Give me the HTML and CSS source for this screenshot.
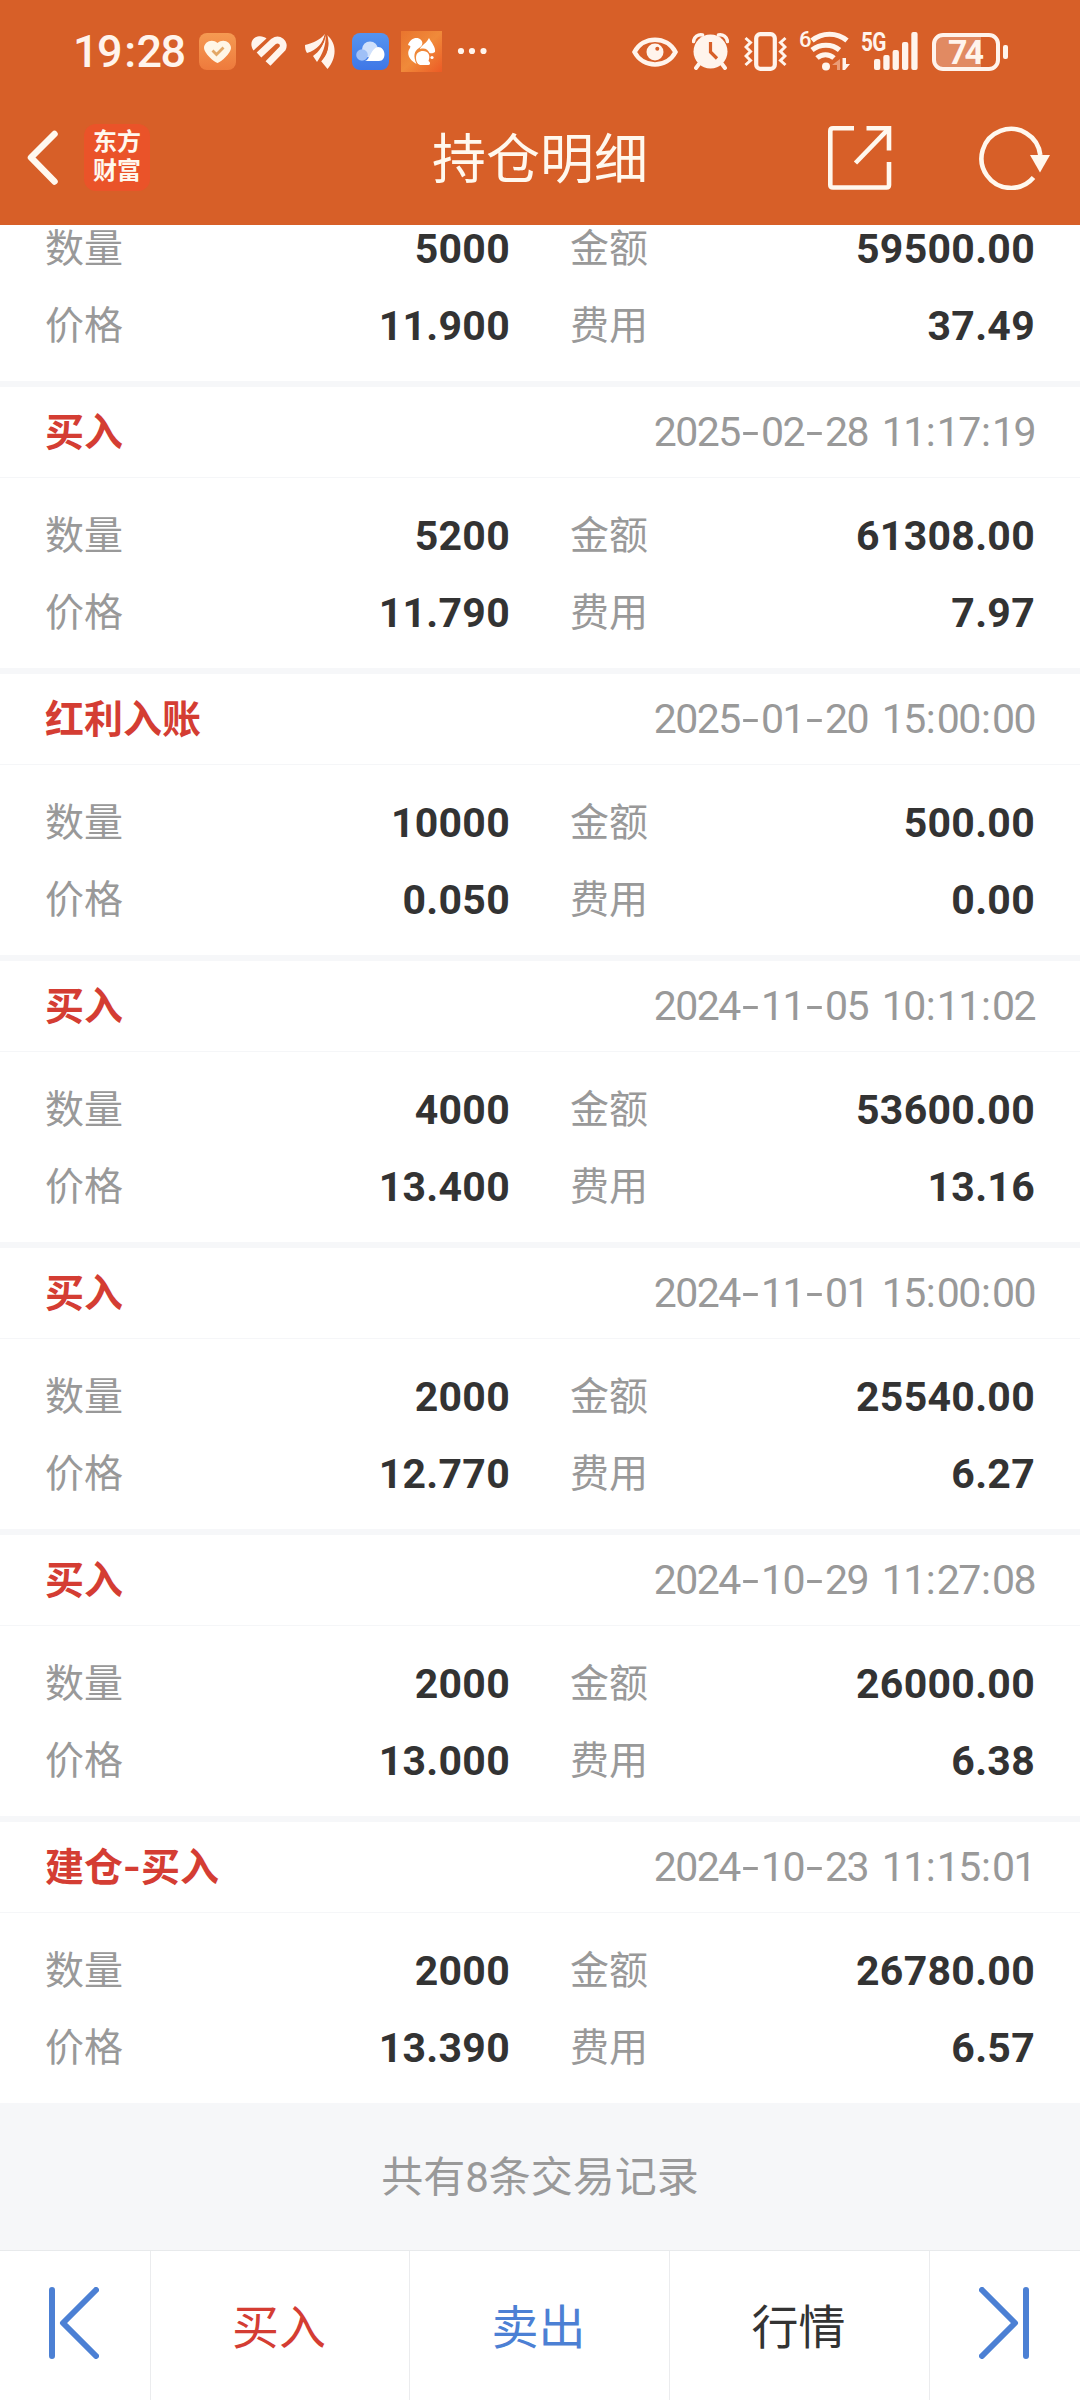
FILE: index.html
```html
<!DOCTYPE html>
<html lang="zh-CN">
<head>
    <meta charset="UTF-8">
    <meta name="viewport" content="width=device-width, initial-scale=1.0">
    <title>持仓明细</title>
    <link rel="stylesheet" href="styles.css">
</head>
<body>
    <header class="header">
        <div class="status-bar">
            <div class="status-left">
                <span class="clock">19<span class="clock-colon">:</span>28</span>
                <svg class="icon-health" width="37" height="37" viewBox="0 0 37 37">
                    <defs>
                        <linearGradient id="healthBg" x1="0" y1="0" x2="0" y2="1">
                            <stop offset="0" stop-color="#f59a52"/>
                            <stop offset="1" stop-color="#ee7a3c"/>
                        </linearGradient>
                    </defs>
                    <rect width="37" height="37" rx="8" fill="url(#healthBg)"/>
                    <path d="M18.500 30C15 29 5 20 5 15C5 9 13 5 18.500 10C24 5 32 9 32 15C32 20 22 29 18.500 30Z" fill="#fff6e6"/>
                    <path d="M13.500 17.500L17.500 21.500L24.500 14.500" fill="none" stroke="#e3a866" stroke-width="2.800"/>
                </svg>
                <svg class="icon-hearts" width="36" height="32" viewBox="0 0 36 32">
                    <path d="M2.500 14.500C-2 8 1 1 8 0.300C11 0 13.500 1 15.500 2.500Z" fill="#fff4ec"/>
                    <path d="M8 19L22.500 5.500C28 1.500 34.500 7 31.500 12.500L17 27.500" fill="none" stroke="#fff4ec" stroke-width="6.800"/>
                </svg>
                <svg class="icon-wing" width="30" height="35" viewBox="0 0 30 35" fill="#fff4ec">
                    <path d="M0 11C8 9 15 6 20 0C18 9 12 16 2 19C0.500 17 0 14 0 11Z"/>
                    <path d="M20.500 1C21.500 11 17 21 12 28L8 22C14 18 19 11 20.500 1Z"/>
                    <path d="M22 1C33 10 31 25 22.500 35L16 27C23 20 24.500 11 22 1Z"/>
                    <path d="M21.500 1C25 13 21 22 14 28.500" fill="none" stroke="#d75f28" stroke-width="1.400"/>
                    <path d="M20 1.500C19 10 14 17 5 21.500" fill="none" stroke="#d75f28" stroke-width="1.200"/>
                </svg>
                <svg class="icon-cloud" width="37" height="37" viewBox="0 0 37 37">
                    <defs>
                        <linearGradient id="cloudBg" x1="0" y1="0" x2="0" y2="1">
                            <stop offset="0" stop-color="#5594f0"/>
                            <stop offset="1" stop-color="#3f77e6"/>
                        </linearGradient>
                    </defs>
                    <rect width="37" height="37" rx="8" fill="url(#cloudBg)"/>
                    <circle cx="18" cy="16.500" r="8" fill="#cfe0fb"/>
                    <circle cx="10" cy="22" r="5.800" fill="#9fc0f7"/>
                    <path d="M13 28C18 27 19 15 26 14C34 14 35 28 27 28Z" fill="#fff"/>
                </svg>
                <svg class="icon-squirrel" width="41" height="41" viewBox="0 0 41 41">
                    <defs>
                        <linearGradient id="ucBg" x1="0" y1="0" x2="1" y2="1">
                            <stop offset="0" stop-color="#e9742e"/>
                            <stop offset="0.500" stop-color="#f08a3a"/>
                            <stop offset="1" stop-color="#ec5a25"/>
                        </linearGradient>
                    </defs>
                    <rect width="41" height="41" fill="url(#ucBg)"/>
                    <path d="M7 14C9 8 14 6 18 7.500C23 10 22 15 18 17C13 20 12 25 15.500 33C8 29 5 22 9 17C10 15 9 14.500 7 14Z" fill="#fff"/>
                    <path d="M21 15C24 12 26 11 28 7C30 11 35 16 34 21C32 22.500 30 22.500 28.500 22C27 18.500 24 16.500 19 18C19 17 20 16 21 15Z" fill="#fff"/>
                    <path d="M15 27C15 22 18 20 22 20C27 20 30 24 27.500 30C29.500 31 29.500 34 27.500 34H19C16 33 15 30 15 27Z" fill="#fff"/>
                    <circle cx="31" cy="26.500" r="1.600" fill="#fff"/>
                </svg>
                <svg class="icon-more" width="30" height="8" viewBox="0 0 30 8" fill="#fff4ec">
                    <circle cx="4" cy="4" r="3.100"/>
                    <circle cx="15" cy="4" r="3.100"/>
                    <circle cx="26.500" cy="4" r="3.100"/>
                </svg>
            </div>
            <div class="status-right">
                <svg class="icon-eye" width="46" height="30" viewBox="0 0 46 30">
                    <path d="M2.500 15C11 -1.500 35 -1.500 43.500 15C35 31.500 11 31.500 2.500 15Z" fill="none" stroke="#fff4ec" stroke-width="4.500"/>
                    <circle cx="23" cy="15" r="8.500" fill="#fff4ec"/>
                    <circle cx="25.300" cy="11.800" r="2" fill="#d75f28"/>
                </svg>
                <svg class="icon-alarm" width="37" height="37" viewBox="0 0 37 37">
                    <path d="M1.500 8.500C2 4 6 1 10.500 2M26.500 2C31 1 35 4 35.500 8.500" fill="none" stroke="#fff4ec" stroke-width="3.500" stroke-linecap="round"/>
                    <circle cx="18.500" cy="18.500" r="17" fill="#fff4ec"/>
                    <path d="M7 31L4 35M30 31L33 35" stroke="#fff4ec" stroke-width="4" stroke-linecap="round"/>
                    <path d="M18.500 9V19L25 25.500" fill="none" stroke="#d75f28" stroke-width="3.200"/>
                </svg>
                <svg class="icon-vibrate" width="43" height="39" viewBox="0 0 43 39" fill="none" stroke="#fff4ec">
                    <rect x="12.200" y="2.200" width="18.600" height="34.600" rx="4" stroke-width="4.200"/>
                    <path d="M1.500 6L6.500 10.500L2 15L6.500 19.500L2 24L6.500 28.500L1.500 33" stroke-width="3"/>
                    <path d="M41.500 6L36.500 10.500L41 15L36.500 19.500L41 24L36.500 28.500L41.500 33" stroke-width="3"/>
                </svg>
                <div class="wifi">
                    <span class="wifi-gen">6</span>
                    <svg width="40" height="40" viewBox="0 0 40 40" fill="none" stroke="#fff4ec" stroke-width="5">
                        <path d="M2 9.500C12 1 27 1 37 9.500"/>
                        <path d="M2 19C10 12.500 22 12.500 29.500 19"/>
                        <path d="M7 27C12 22.500 19 22.500 24 27"/>
                        <circle cx="16" cy="35.500" r="4" fill="#fff4ec" stroke="none"/>
                        <path d="M30 28V39H27V34H22Z" fill="#eb9d77" stroke="none"/>
                        <path d="M32.500 27V39H35L40 33H36V27Z" fill="#fff4ec" stroke="none"/>
                    </svg>
                </div>
                <div class="signal">
                    <span class="signal-gen">5G</span>
                    <svg width="44" height="38" viewBox="0 0 44 38" fill="#fff4ec">
                        <rect x="0" y="27" width="6.300" height="11" rx="2"/>
                        <rect x="9.300" y="23" width="6.300" height="15" rx="2"/>
                        <rect x="18.600" y="18" width="6.300" height="20" rx="2"/>
                        <rect x="28" y="10" width="6.300" height="28" rx="2"/>
                        <rect x="37.300" y="0" width="6.300" height="38" rx="2"/>
                    </svg>
                </div>
                <div class="battery"><span class="battery-level">74</span></div>
                <div class="battery-tip"></div>
            </div>
        </div>
        <div class="nav-bar">
            <div class="nav-left">
                <svg width="34" height="56" viewBox="0 0 34 56" fill="none" stroke="#fff8ee" stroke-width="6.500" stroke-linecap="round" stroke-linejoin="round">
                    <path d="M30.500 4L7 27.500L30.500 51.500"/>
                </svg>
                <div class="logo"><span>东方</span><span>财富</span></div>
            </div>
            <h1 class="title">持仓明细</h1>
            <div class="nav-right">
                <svg width="64" height="64" viewBox="0 0 64 64" fill="none" stroke="#fff8ee" stroke-width="4.600">
                    <path d="M26 2.300H5Q2.300 2.300 2.300 5V59Q2.300 61.500 5 61.500H58.500Q61 61.500 61 59V36"/>
                    <path d="M38.500 2.300H61V24.500"/>
                    <path d="M60.500 2.800L27.500 37"/>
                </svg>
                <svg width="72" height="64" viewBox="0 0 72 64">
                    <path d="M54.500 51.500A29.500 29.500 0 1 1 61.300 29" fill="none" stroke="#fff8ee" stroke-width="4.600"/>
                    <path d="M51 29H71L61 46.500Z" fill="#fff8ee"/>
                </svg>
            </div>
        </div>
    </header>

    <main class="records">
        <section class="record">
            <div class="record-body">
                <div class="field"><span>数量</span><b>5000</b></div>
                <div class="field"><span>金额</span><b>59500.00</b></div>
                <div class="field"><span>价格</span><b>11.900</b></div>
                <div class="field"><span>费用</span><b>37.49</b></div>
            </div>
        </section>
        <section class="record">
            <div class="record-head">
                <h2>买入</h2>
                <time>2025<i>-</i>02<i>-</i>28 11<i class="colon">:</i>17<i class="colon">:</i>19</time>
            </div>
            <div class="record-body">
                <div class="field"><span>数量</span><b>5200</b></div>
                <div class="field"><span>金额</span><b>61308.00</b></div>
                <div class="field"><span>价格</span><b>11.790</b></div>
                <div class="field"><span>费用</span><b>7.97</b></div>
            </div>
        </section>
        <section class="record">
            <div class="record-head">
                <h2>红利入账</h2>
                <time>2025<i>-</i>01<i>-</i>20 15<i class="colon">:</i>00<i class="colon">:</i>00</time>
            </div>
            <div class="record-body">
                <div class="field"><span>数量</span><b>10000</b></div>
                <div class="field"><span>金额</span><b>500.00</b></div>
                <div class="field"><span>价格</span><b>0.050</b></div>
                <div class="field"><span>费用</span><b>0.00</b></div>
            </div>
        </section>
        <section class="record">
            <div class="record-head">
                <h2>买入</h2>
                <time>2024<i>-</i>11<i>-</i>05 10<i class="colon">:</i>11<i class="colon">:</i>02</time>
            </div>
            <div class="record-body">
                <div class="field"><span>数量</span><b>4000</b></div>
                <div class="field"><span>金额</span><b>53600.00</b></div>
                <div class="field"><span>价格</span><b>13.400</b></div>
                <div class="field"><span>费用</span><b>13.16</b></div>
            </div>
        </section>
        <section class="record">
            <div class="record-head">
                <h2>买入</h2>
                <time>2024<i>-</i>11<i>-</i>01 15<i class="colon">:</i>00<i class="colon">:</i>00</time>
            </div>
            <div class="record-body">
                <div class="field"><span>数量</span><b>2000</b></div>
                <div class="field"><span>金额</span><b>25540.00</b></div>
                <div class="field"><span>价格</span><b>12.770</b></div>
                <div class="field"><span>费用</span><b>6.27</b></div>
            </div>
        </section>
        <section class="record">
            <div class="record-head">
                <h2>买入</h2>
                <time>2024<i>-</i>10<i>-</i>29 11<i class="colon">:</i>27<i class="colon">:</i>08</time>
            </div>
            <div class="record-body">
                <div class="field"><span>数量</span><b>2000</b></div>
                <div class="field"><span>金额</span><b>26000.00</b></div>
                <div class="field"><span>价格</span><b>13.000</b></div>
                <div class="field"><span>费用</span><b>6.38</b></div>
            </div>
        </section>
        <section class="record">
            <div class="record-head">
                <h2>建仓<i>-</i>买入</h2>
                <time>2024<i>-</i>10<i>-</i>23 11<i class="colon">:</i>15<i class="colon">:</i>01</time>
            </div>
            <div class="record-body">
                <div class="field"><span>数量</span><b>2000</b></div>
                <div class="field"><span>金额</span><b>26780.00</b></div>
                <div class="field"><span>价格</span><b>13.390</b></div>
                <div class="field"><span>费用</span><b>6.57</b></div>
            </div>
        </section>
    </main>

    <p class="summary">共有8条交易记录</p>

    <footer class="toolbar">
        <button class="tool">
            <svg width="50" height="72" viewBox="0 0 50 72" fill="none" stroke="#4c80d4" stroke-width="6" stroke-linecap="round" stroke-linejoin="round">
                <path d="M3 3V69M47 3L14 36L47 69"/>
            </svg>
        </button>
        <button class="tool buy">买入</button>
        <button class="tool sell">卖出</button>
        <button class="tool">行情</button>
        <button class="tool">
            <svg width="50" height="72" viewBox="0 0 50 72" fill="none" stroke="#4c80d4" stroke-width="6" stroke-linecap="round" stroke-linejoin="round">
                <path d="M47 3V69M3 3L36 36L3 69"/>
            </svg>
        </button>
    </footer>
</body>
</html>
```

FILE: styles.css
```css
* {
    box-sizing: border-box;
}

body {
    margin: 0;
    width: 1080px;
    height: 2400px;
    display: flex;
    flex-direction: column;
    overflow: hidden;
    background: #fff;
    color: #333;
    font-family: Roboto, "Noto Sans CJK SC", sans-serif;
}

svg {
    display: block;
    flex: none;
}

i {
    font-style: normal;
}

/* header */
.header {
    flex: none;
    height: 225px;
    background: #d75f28;
    color: #fff8ee;
}

.status-bar {
    display: flex;
    justify-content: space-between;
    height: 103px;
    padding: 0 72px 0 73px;
}

.status-left,
.status-right {
    display: flex;
    align-items: center;
    color: #fff4ec;
}

.clock {
    width: 126px;
    font-size: 45px;
    font-weight: 500;
    letter-spacing: -1.5px;
    line-height: 52px;
}

.clock-colon {
    padding: 0 2px 0 3px;
}

.icon-hearts {
    margin-left: 15px;
}

.icon-wing {
    margin-left: 18px;
}

.icon-cloud {
    margin-left: 17px;
}

.icon-squirrel {
    margin-left: 12px;
}

.icon-more {
    margin: 0 0 2px 15px;
}

.icon-alarm {
    margin-left: 14px;
}

.icon-vibrate {
    margin-left: 15px;
}

.wifi {
    position: relative;
    margin: 0 0 2px 23px;
}

.wifi-gen {
    position: absolute;
    left: -11px;
    top: -2px;
    font-size: 22px;
    font-weight: 500;
    line-height: 22px;
}

.signal {
    position: relative;
    margin: 0 0 2px 24px;
}

.signal-gen {
    position: absolute;
    left: -13px;
    top: -3px;
    font-size: 26px;
    font-weight: 700;
    line-height: 26px;
    letter-spacing: -1px;
    transform: scaleX(0.8);
    transform-origin: 0 0;
}

.battery {
    width: 68px;
    height: 38px;
    margin-left: 14px;
    padding-right: 3px;
    border: 4px solid #fff4ec;
    border-radius: 11px;
    background: linear-gradient(to right, #e18a62 45px, transparent 45px);
    text-align: center;
}

.battery-level {
    font-size: 34px;
    font-weight: 700;
    line-height: 31px;
    letter-spacing: -3px;
}

.battery-tip {
    width: 5px;
    height: 14px;
    margin-left: 3px;
    border-radius: 2px;
    background: #fff4ec;
}

.nav-bar {
    display: grid;
    grid-template-columns: 1fr auto 1fr;
    align-items: center;
    height: 109px;
    padding: 0 29px 0 24px;
}

.nav-left,
.nav-right {
    display: flex;
    align-items: center;
}

.nav-left {
    gap: 26px;
}

.nav-right {
    justify-content: flex-end;
    gap: 87px;
}

.logo {
    display: flex;
    flex-direction: column;
    align-items: center;
    justify-content: center;
    width: 66px;
    height: 67px;
    padding-bottom: 1px;
    border-radius: 12px;
    background: #ea5329;
    font-size: 24px;
    font-weight: 700;
    line-height: 29px;
}

.title {
    margin: 0;
    padding: 6px 0 0 5px;
    font-size: 54px;
    font-weight: 400;
    line-height: 60px;
}

/* records */
.records {
    flex: none;
    height: 1878px;
    display: flex;
    flex-direction: column;
    justify-content: flex-end;
    gap: 6px;
    overflow: hidden;
    background: #f6f7f9;
}

.record {
    background: #fff;
}

.record-head {
    display: flex;
    align-items: center;
    justify-content: space-between;
    height: 91px;
    padding: 0 45px;
    border-bottom: 1px solid #f5f6f8;
}

.record-head h2 {
    margin: 0;
    padding-top: 2px;
    color: #d43d33;
    font-size: 39px;
    font-weight: 700;
    line-height: 60px;
}

.record-head time {
    color: #999;
    font-size: 41px;
    line-height: 60px;
    letter-spacing: -1.5px;
    word-spacing: 5px;
}

.record-head i {
    display: inline-block;
    width: 21px;
    letter-spacing: 0;
    text-align: center;
    transform: scaleX(1.5);
}

.record-head .colon {
    width: 12px;
    transform: none;
}

.record-head h2 i {
    width: 18px;
    transform: scaleX(1.2);
}

.record-body {
    display: grid;
    grid-template-columns: 1fr 1fr;
    grid-auto-rows: 77px;
    column-gap: 60px;
    height: 190px;
    padding: 19px 45px 0;
}

.field {
    display: flex;
    align-items: center;
    justify-content: space-between;
    line-height: 60px;
}

.field span {
    padding-top: 1px;
    color: #999;
    font-size: 39px;
}

.field b {
    font-size: 41px;
    font-weight: 700;
    letter-spacing: 0.3px;
}

.summary {
    flex: none;
    height: 147px;
    margin: 0;
    background: #f6f7f9;
    color: #999;
    font-size: 42px;
    line-height: 149px;
    text-align: center;
}

/* bottom toolbar */
.toolbar {
    flex: none;
    display: grid;
    grid-template-columns: 151px 259px 260px 260px 150px;
    height: 150px;
    border-top: 1px solid #e8eaec;
}

.tool {
    display: flex;
    align-items: center;
    justify-content: center;
    padding: 0 2px 5px 0;
    border: none;
    border-right: 1px solid #ebecee;
    background: #fff;
    color: #333;
    font-family: inherit;
    font-size: 47px;
}

.tool:last-child {
    border-right: none;
}

.buy {
    color: #d43d33;
}

.sell {
    color: #4c80d4;
}
```
